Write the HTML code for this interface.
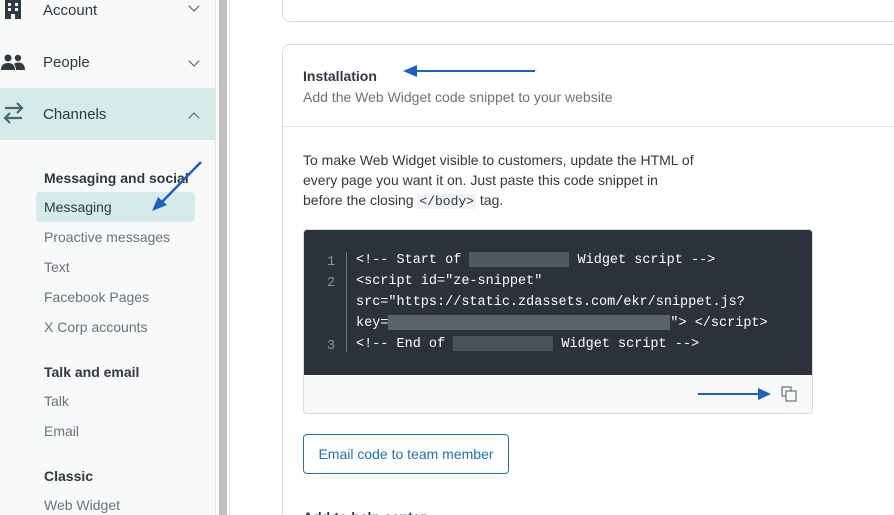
<!DOCTYPE html>
<html><head><style>
*{margin:0;padding:0;box-sizing:border-box}
html,body{width:894px;height:515px;overflow:hidden}
body{background:#fff;font-family:"Liberation Sans",sans-serif;color:#2f3941;position:relative}
.side{position:absolute;left:0;top:0;width:216px;height:515px;background:#f8f9f9;border-right:1px solid #e3e6e8}
.nav{position:absolute;left:0;width:215px;height:52px;font-size:15px;display:flex;align-items:center}
.nav span{position:absolute;left:43px}
.nav .ch{position:absolute;left:190px;width:8px;height:8px;border-right:1.5px solid #49545c;border-bottom:1.5px solid #49545c}
.sub{position:absolute;left:44px;font-size:14px;color:#68737d}
.hd{position:absolute;left:44px;font-size:14px;color:#2f3941;font-weight:bold}
.card{position:absolute;left:282px;width:612px;border:1px solid #d8dcde;border-right:none;border-radius:8px 0 0 8px;background:#fff}
.mono{font-family:"Liberation Mono",monospace}
.blur{display:inline-block;height:15px;background:#4f575f;vertical-align:middle}
</style></head><body>
<div class="side">
  <div class="nav" style="top:-16px"><svg style="position:absolute;left:5px;top:16px" width="16" height="19" viewBox="0 0 16 19"><path d="M0 0h16v19h-6v-5h-4v5H0z" fill="#2f3941"/><rect x="3" y="3" width="3" height="3" fill="#f8f9f9"/><rect x="10" y="3" width="3" height="3" fill="#f8f9f9"/><rect x="3" y="8" width="3" height="3" fill="#f8f9f9"/><rect x="10" y="8" width="3" height="3" fill="#f8f9f9"/></svg><span>Account</span><i class="ch" style="transform:rotate(45deg);top:18px"></i></div>
  <div class="nav" style="top:36px"><svg style="position:absolute;left:1px;top:18px" width="24" height="16" viewBox="0 0 24 16"><circle cx="7" cy="4" r="3.5" fill="#2f3941"/><circle cx="17" cy="4" r="3.2" fill="#2f3941"/><path d="M0 16c0-5 3-7 7-7s7 2 7 7z" fill="#2f3941"/><path d="M13 10c1-1 2.5-1.5 4-1.5 4 0 7 2 7 7.5h-9c0-2-.8-4.5-2-6z" fill="#2f3941"/></svg><span>People</span><i class="ch" style="transform:rotate(45deg);top:21px"></i></div>
  <div class="nav" style="top:88px;height:52px;background:#d4ebe8"><svg style="position:absolute;left:3px;top:14px" width="21" height="22" viewBox="0 0 21 22" fill="none" stroke="#3e6e70" stroke-width="2.2"><path d="M2 6h17M14 1l5 5-5 5"/><path d="M19 16H2M7 11l-5 5 5 5"/></svg><span>Channels</span><i class="ch" style="transform:rotate(-135deg);top:26px"></i></div>
  <div class="hd" style="top:170px">Messaging and social</div>
  <div style="position:absolute;left:36px;top:192px;width:159px;height:30px;background:#d4ebe8;border-radius:4px"></div>
  <div class="sub" style="top:199px;color:#2f3941">Messaging</div>
  <div class="sub" style="top:229px">Proactive messages</div>
  <div class="sub" style="top:259px">Text</div>
  <div class="sub" style="top:289px">Facebook Pages</div>
  <div class="sub" style="top:319px">X Corp accounts</div>
  <div class="hd" style="top:364px">Talk and email</div>
  <div class="sub" style="top:393px">Talk</div>
  <div class="sub" style="top:423px">Email</div>
  <div class="hd" style="top:468px">Classic</div>
  <div class="sub" style="top:497px">Web Widget</div>
  <svg style="position:absolute;left:148px;top:160px" width="56" height="56" viewBox="0 0 56 56"><path d="M53 2L12 44" stroke="#1f5fc4" stroke-width="2.5"/><path d="M4 51l6-14 9 8z" fill="#1f5fc4"/></svg>
</div>
<div style="position:absolute;left:219px;top:0;width:8px;height:515px;background:#c1c1c1"></div>
<div style="position:absolute;left:229px;top:0;width:1px;height:515px;background:#e3e6e8"></div>
<div class="card" style="top:-20px;height:42px"></div>
<div class="card" style="top:44px;height:471px;border-bottom:none;border-radius:8px 0 0 0;overflow:hidden">
  <div style="position:absolute;left:20px;top:23px;font-size:14px;font-weight:bold">Installation</div>
  <div style="position:absolute;left:20px;top:44px;font-size:14px;color:#68737d">Add the Web Widget code snippet to your website</div>
  <svg style="position:absolute;left:118px;top:18px" width="136" height="16"><path d="M14 8L134 8" stroke="#1f5fc4" stroke-width="2"/><path d="M2 8l14-6v12z" fill="#1f5fc4"/></svg>
  <div style="position:absolute;left:0;top:81px;width:640px;height:1px;background:#e3e6e8"></div>
  <div style="position:absolute;left:20px;top:105px;font-size:14px;line-height:20px;width:398px">To make Web Widget visible to customers, update the HTML of every page you want it on. Just paste this code snippet in before the closing <span class="mono" style="background:#f1f3f4;font-size:13px;padding:0 2px">&lt;/body&gt;</span> tag.</div>
  <div style="position:absolute;left:20px;top:184px;width:510px;height:185px;border:1px solid #d8dcde;border-radius:4px;overflow:hidden;background:#f8f9f9">
    <div style="height:145px;background:#2b323b;position:relative;font-size:13.5px;color:#fff" class="mono">
      <div style="position:absolute;left:23px;top:22px;color:#87929d;line-height:21px">1<br>2<br><br><br>3</div>
      <div style="position:absolute;left:42px;top:22px;width:1px;height:100px;background:#68737d"></div>
      <div style="position:absolute;left:52px;top:20px;line-height:21px;white-space:pre">&lt;!-- Start of <span class="blur" style="width:100px"></span> Widget script --&gt;
&lt;script id="ze-snippet"
src="https://static.zdassets.com/ekr/snippet.js?
key=<span class="blur" style="width:282px;background:#5a626a"></span>"&gt; &lt;/script&gt;
&lt;!-- End of <span class="blur" style="width:100px;background:#4a525a"></span> Widget script --&gt;</div>
    </div>
    <svg style="position:absolute;left:392px;top:154px" width="108" height="20"><path d="M2 10L70 10" stroke="#1f5fc4" stroke-width="2"/><path d="M62 4l13 6-13 6z" fill="#1f5fc4"/><rect x="86" y="3" width="9" height="9" fill="none" stroke="#68737d" stroke-width="1.2"/><rect x="90" y="7" width="10" height="10" fill="#f8f9f9" stroke="#68737d" stroke-width="1.2"/></svg>
  </div>
  <div style="position:absolute;left:20px;top:389px;width:206px;height:40px;border:1px solid #1f73b7;border-radius:4px;color:#1f73b7;font-size:14px;line-height:38px;text-align:center">Email code to team member</div>
  <div style="position:absolute;left:20px;top:464px;font-size:14px;font-weight:bold">Add to help center</div>
</div>
</body></html>
